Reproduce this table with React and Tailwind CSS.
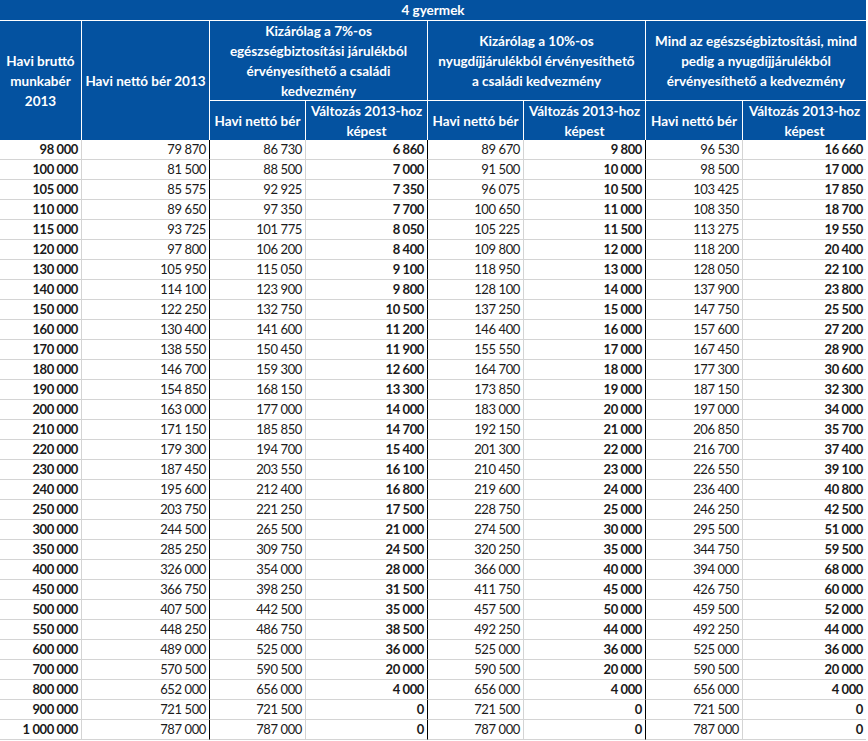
import React from "react";

const rows = [
  [98000, 79870, 86730, 6860, 89670, 9800, 96530, 16660],
  [100000, 81500, 88500, 7000, 91500, 10000, 98500, 17000],
  [105000, 85575, 92925, 7350, 96075, 10500, 103425, 17850],
  [110000, 89650, 97350, 7700, 100650, 11000, 108350, 18700],
  [115000, 93725, 101775, 8050, 105225, 11500, 113275, 19550],
  [120000, 97800, 106200, 8400, 109800, 12000, 118200, 20400],
  [130000, 105950, 115050, 9100, 118950, 13000, 128050, 22100],
  [140000, 114100, 123900, 9800, 128100, 14000, 137900, 23800],
  [150000, 122250, 132750, 10500, 137250, 15000, 147750, 25500],
  [160000, 130400, 141600, 11200, 146400, 16000, 157600, 27200],
  [170000, 138550, 150450, 11900, 155550, 17000, 167450, 28900],
  [180000, 146700, 159300, 12600, 164700, 18000, 177300, 30600],
  [190000, 154850, 168150, 13300, 173850, 19000, 187150, 32300],
  [200000, 163000, 177000, 14000, 183000, 20000, 197000, 34000],
  [210000, 171150, 185850, 14700, 192150, 21000, 206850, 35700],
  [220000, 179300, 194700, 15400, 201300, 22000, 216700, 37400],
  [230000, 187450, 203550, 16100, 210450, 23000, 226550, 39100],
  [240000, 195600, 212400, 16800, 219600, 24000, 236400, 40800],
  [250000, 203750, 221250, 17500, 228750, 25000, 246250, 42500],
  [300000, 244500, 265500, 21000, 274500, 30000, 295500, 51000],
  [350000, 285250, 309750, 24500, 320250, 35000, 344750, 59500],
  [400000, 326000, 354000, 28000, 366000, 40000, 394000, 68000],
  [450000, 366750, 398250, 31500, 411750, 45000, 426750, 60000],
  [500000, 407500, 442500, 35000, 457500, 50000, 459500, 52000],
  [550000, 448250, 486750, 38500, 492250, 44000, 492250, 44000],
  [600000, 489000, 525000, 36000, 525000, 36000, 525000, 36000],
  [700000, 570500, 590500, 20000, 590500, 20000, 590500, 20000],
  [800000, 652000, 656000, 4000, 656000, 4000, 656000, 4000],
  [900000, 721500, 721500, 0, 721500, 0, 721500, 0],
  [1000000, 787000, 787000, 0, 787000, 0, 787000, 0],
];

const fmt = (n) => String(n).replace(/\B(?=(\d{3})+(?!\d))/g, " ");

const bold = [true, false, false, true, false, true, false, true];
const borderCls = [
  "border-r border-[#d4d4d4]",
  "border-r border-r-black",
  "border-r border-[#d4d4d4]",
  "border-r border-r-black",
  "border-r border-[#d4d4d4]",
  "border-r border-r-black",
  "border-r border-[#d4d4d4]",
  "",
];

const H = "bg-[#0452a0] text-white font-bold flex items-center justify-center text-center whitespace-nowrap border-white";

export default function App() {
  return (
    <div
      className="w-[868px] h-[741px] bg-white overflow-hidden"
      style={{ fontFamily: "Lato, 'Liberation Sans', sans-serif" }}
    >
      <div className="grid grid-cols-[82px_128px_96px_122px_96px_122px_97px_123px] grid-rows-[21px_80px_39px] text-[13.5px] leading-[20px]">
        <div className={`${H} col-span-8 border-b`}>4 gyermek</div>
        <div className={`${H} row-span-2 border-r`}>
          Havi bruttó
          <br />
          munkabér
          <br />
          2013
        </div>
        <div className={`${H} row-span-2 border-r`}>Havi nettó bér 2013</div>
        <div className={`${H} col-span-2 border-r border-b`}>
          <div>
            Kizárólag a 7%-os
            <br />
            egészségbiztosítási járulékból
            <br />
            érvényesíthető a családi
            <br />
            kedvezmény
          </div>
        </div>
        <div className={`${H} col-span-2 border-r border-b`}>
          <div>
            Kizárólag a 10%-os
            <br />
            nyugdíjjárulékból érvényesíthető
            <br />a családi kedvezmény
          </div>
        </div>
        <div className={`${H} col-span-2 border-b`}>
          <div>
            Mind az egészségbiztosítási, mind
            <br />
            pedig a nyugdíjjárulékból
            <br />
            érvényesíthető a kedvezmény
          </div>
        </div>
        {[0, 1, 2].map((g) => (
          <React.Fragment key={g}>
            <div className={`${H} border-r`}>Havi nettó bér</div>
            <div className={`${H} ${g < 2 ? "border-r" : ""}`}>
              <div>
                Változás 2013-hoz
                <br />
                képest
              </div>
            </div>
          </React.Fragment>
        ))}
      </div>
      <div className="grid grid-cols-[82px_128px_96px_122px_96px_122px_97px_123px] auto-rows-[20px] text-[13px] tracking-[-0.4px] text-[#1a1a1a]">
        {rows.map((r, i) =>
          r.map((v, j) => (
            <div
              key={i + "-" + j}
              className={`flex items-center justify-end pr-[3px] border-b border-b-[#d4d4d4] whitespace-nowrap ${borderCls[j]} ${bold[j] ? "font-bold" : ""}`}
            >
              {fmt(v)}
            </div>
          ))
        )}
      </div>
    </div>
  );
}
